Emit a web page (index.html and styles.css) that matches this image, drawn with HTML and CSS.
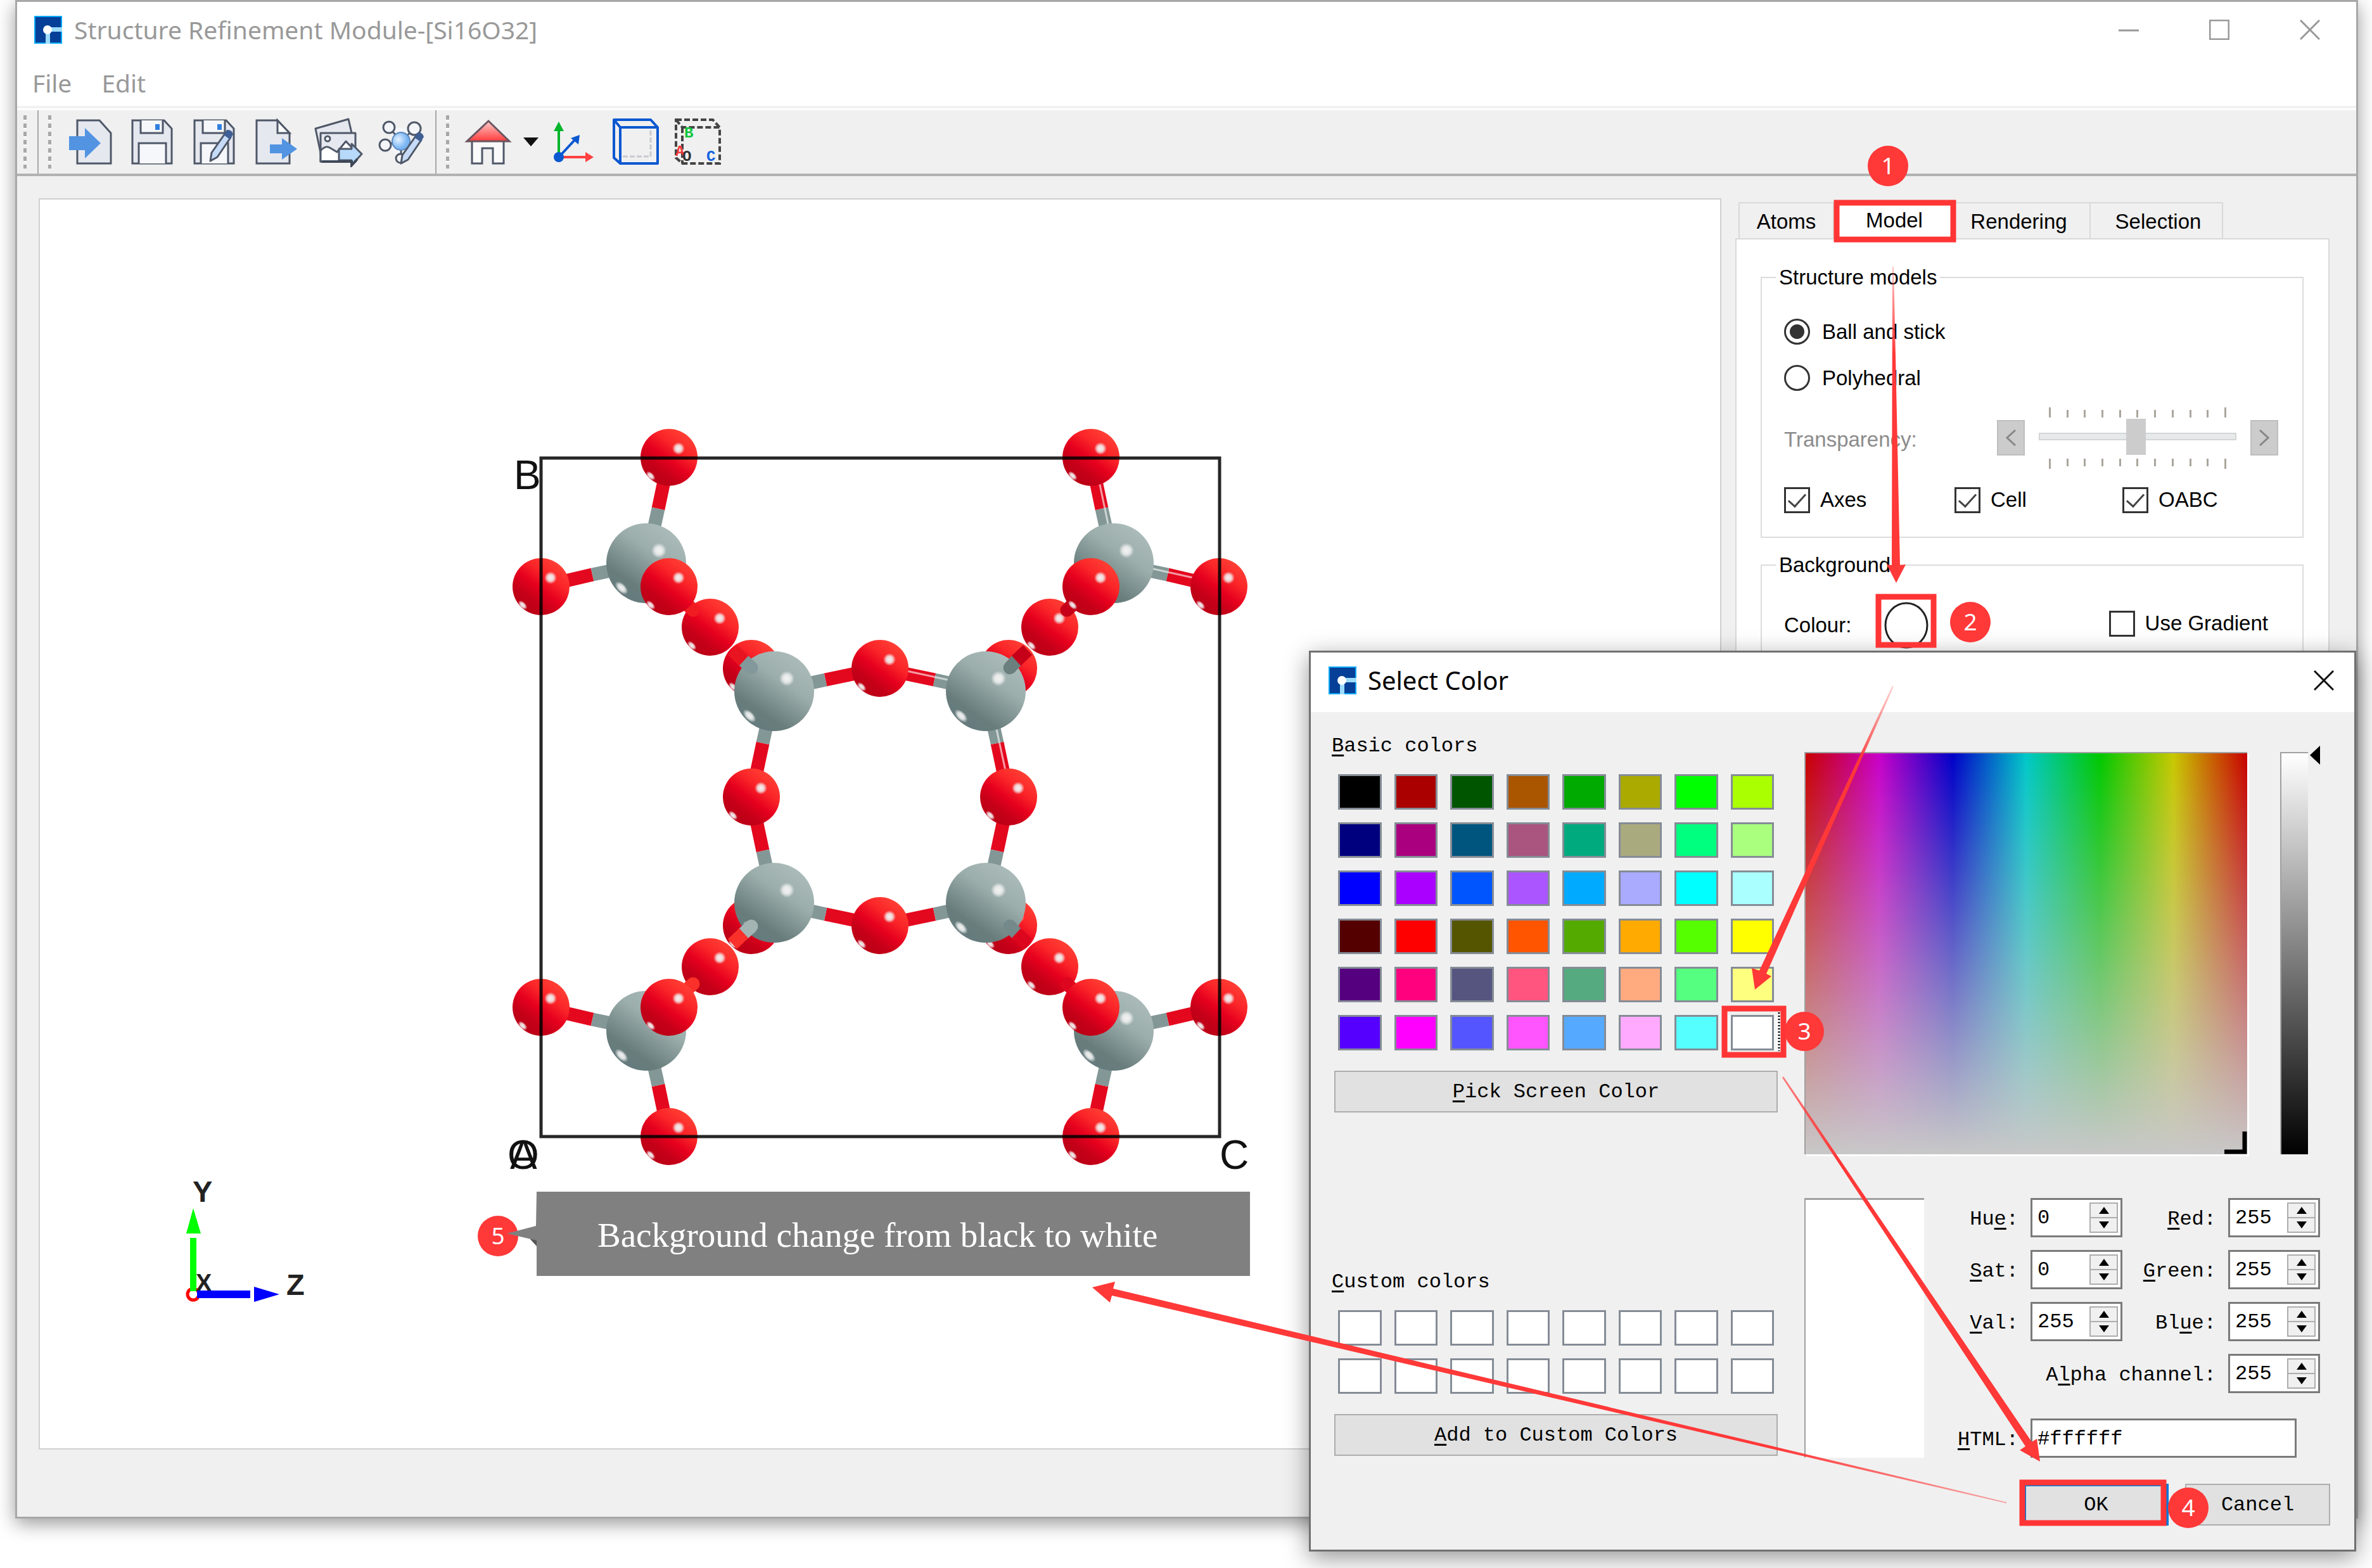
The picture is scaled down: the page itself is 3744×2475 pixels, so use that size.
FILE: index.html
```html
<!DOCTYPE html>
<html lang="en">
<head>
<meta charset="utf-8">
<title>Structure Refinement Module-[Si16O32]</title>
<link rel="stylesheet" href="styles.css">
</head>
<body>
<svg class="defs" aria-hidden="true">
  <defs>
    <symbol id="logo" viewBox="0 0 44 44">
      <rect width="44" height="44" fill="#00a8f8"/>
      <rect x="2" y="2" width="40" height="40" fill="#053f97"/>
      <rect x="22" y="18" width="22" height="7" fill="#9bdcff"/>
      <rect x="18" y="22" width="7" height="22" fill="#9bdcff"/>
      <circle cx="21" cy="22" r="7" fill="#fff"/>
    </symbol>
    <symbol id="floppy" viewBox="0 0 80 80">
      <path d="M9 6H59L71 19V74H9Z" fill="#e6e8ef" stroke="#4f5868" stroke-width="3"/>
      <path d="M22 6V26H57V6M19 74V42H62V74" fill="#f6f7fa" stroke="#4f5868" stroke-width="3"/>
      <rect x="45" y="12" width="7" height="9" fill="#2f7fe0"/>
    </symbol>
    <symbol id="pen" viewBox="0 0 80 80">
      <path d="M34 70L36 57L57 27L66 33L45 64Z" fill="#c6dbf7" stroke="#4f5868" stroke-width="3" stroke-linejoin="round"/>
      <path d="M55 29L60 21Q68 20 70 28L65 36Z" fill="#3f5f94"/>
    </symbol>
    <linearGradient id="gO" x1=".82" y1=".12" x2=".25" y2=".88">
      <stop offset="0" stop-color="#ff3e34"/><stop offset=".3" stop-color="#fa2428"/><stop offset=".56" stop-color="#e6001e"/><stop offset=".82" stop-color="#c40018"/><stop offset="1" stop-color="#bd0016"/>
    </linearGradient>
    <linearGradient id="gSi" x1=".78" y1=".1" x2=".25" y2=".88">
      <stop offset="0" stop-color="#a9bab9"/><stop offset=".35" stop-color="#9caeac"/><stop offset=".65" stop-color="#7c908f"/><stop offset=".85" stop-color="#687d7b"/><stop offset="1" stop-color="#667b7d"/>
    </linearGradient>
    <radialGradient id="gHi"><stop offset="0" stop-color="#f2f2f2"/><stop offset=".5" stop-color="#f2f2f2" stop-opacity=".85"/><stop offset="1" stop-color="#f2f2f2" stop-opacity="0"/></radialGradient>
    <g id="o">
      <circle r="45" fill="url(#gO)"/>
      <circle cx="15" cy="-14" r="10" fill="url(#gHi)"/>
      <ellipse rx="9" ry="5" transform="translate(-29 29) rotate(45)" fill="url(#gHi)"/>
    </g>
    <g id="si">
      <circle r="63" fill="url(#gSi)"/>
      <circle cx="20" cy="-20" r="12" fill="url(#gHi)"/>
      <ellipse rx="13" ry="7" transform="translate(-39 39) rotate(45)" fill="url(#gHi)"/>
    </g>
    <linearGradient id="roof" x1="0" y1="0" x2="0" y2="1"><stop offset="0" stop-color="#fcc"/><stop offset="1" stop-color="#ff3b3b"/></linearGradient>
    <radialGradient id="atom" cx=".35" cy=".4"><stop offset="0" stop-color="#e3f1ff"/><stop offset="1" stop-color="#7ab5f2"/></radialGradient>
  </defs>
</svg>

<main class="window">
  <header class="titlebar">
    <svg class="logo"><use href="#logo"/></svg>
    <h1>Structure Refinement Module-[Si16O32]</h1>
    <div class="controls">
      <button aria-label="Minimize"><svg viewBox="0 0 32 32"><path d="M0 17H32"/></svg></button>
      <button aria-label="Maximize"><svg viewBox="0 0 32 32"><path d="M1 1H31V31H1Z"/></svg></button>
      <button aria-label="Close"><svg viewBox="0 0 32 32"><path d="M1 1L31 31M31 1L1 31"/></svg></button>
    </div>
  </header>
  <nav class="menubar"><button>File</button><button>Edit</button></nav>

  <div class="toolbar">
    <div class="tools"><i class="grip"></i></div>
    <div class="tools">
      <i class="grip"></i>
      <button aria-label="Import"><svg viewBox="0 0 80 80"><path d="M20 6H55L73 26V74H20Z" fill="#e6e8ef" stroke="#4f5868" stroke-width="3"/><path d="M7 31H32V18L57 42L32 66V53H7Z" fill="#5294e2"/></svg></button>
      <button aria-label="Save"><svg><use href="#floppy"/></svg></button>
      <button aria-label="Save as"><svg><use href="#floppy"/><use href="#pen"/></svg></button>
      <button aria-label="Export"><svg viewBox="0 0 80 80"><path d="M9 6H42L61 26V74H9Z" fill="#e6e8ef" stroke="#4f5868" stroke-width="3"/><path d="M42 6V26H61Z" fill="#fff" stroke="#4f5868" stroke-width="3"/><path d="M30 44H49V34L73 51L49 68V58H30Z" fill="#5294e2"/></svg></button>
      <button aria-label="Export image"><svg viewBox="0 0 80 80"><g stroke="#4f5868" stroke-width="3" stroke-linejoin="round"><path d="M13 62L4 19L56 4L62 30" fill="#e6e8ef"/><path d="M12 26H67V71H12Z" fill="#e6e8ef"/><circle cx="23" cy="35" r="4" fill="#fff"/><path d="M12 54Q20 44 28 50L38 56L52 39L67 55V71H12Z" fill="#fff"/><path d="M41 51H61V43L77 59L61 77V69H41Z" fill="#b7dafb"/></g><path d="M14 71H61V77L70 67" fill="none" stroke="#3f4858" stroke-width="4"/></svg></button>
      <button aria-label="Edit atoms"><svg viewBox="0 0 80 80"><g fill="#f4f5f8" stroke="#4f5868" stroke-width="3"><path d="M22 17L41 39L62 19M16 45L41 39L41 65"/><circle cx="22" cy="17" r="9"/><circle cx="62" cy="19" r="10"/><circle cx="16" cy="45" r="9"/><circle cx="40" cy="66" r="7"/></g><circle cx="41" cy="39" r="14" fill="url(#atom)" stroke="#5c88bd" stroke-width="2"/><g transform="translate(7 4)"><use href="#pen" width="80" height="80"/></g></svg></button>
    </div>
    <div class="tools">
      <i class="grip"></i>
      <button aria-label="Home"><svg viewBox="0 0 80 80"><path d="M15 38V74H31V50H48V74H65V38" fill="#fafafa" stroke="#4f5868" stroke-width="3"/><path d="M41 7L74 39H7Z" fill="url(#roof)" stroke="#6a5560" stroke-width="3"/></svg></button>
      <button class="drop" aria-label="Home options"><svg viewBox="0 0 24 14"><path d="M0 0H24L12 14Z" fill="#111"/></svg></button>
      <button aria-label="Axes"><svg viewBox="0 0 80 80"><path d="M17 64V20" stroke="#00b52a" stroke-width="4"/><path d="M17 8L25 23H9Z" fill="#00b52a"/><path d="M17 64H60" stroke="#ff4040" stroke-width="4"/><path d="M72 64L59 56V72Z" fill="#ff4040"/><path d="M17 64L43 36" stroke="#0a57d0" stroke-width="4"/><path d="M50 29L48 44L36 34Z" fill="#0a57d0"/><circle cx="17" cy="64" r="8" fill="#0a57d0"/></svg></button>
      <button aria-label="Cell box"><svg viewBox="0 0 80 80"><path d="M64 22V63H20" fill="none" stroke="#c9c9d0" stroke-width="3" stroke-dasharray="8 3"/><path d="M6 5H64L75 17V74H16L6 65ZM6 5L16 17H75M16 17V74" fill="none" stroke="#0a57d0" stroke-width="4" stroke-linejoin="round"/></svg></button>
      <button aria-label="OABC labels"><svg viewBox="0 0 80 80"><path d="M6 5H64L75 17V74H16L6 65ZM6 5L16 17H75M16 17V74" fill="none" stroke="#444" stroke-width="4" stroke-dasharray="9 4"/><g class="glyphs"><text x="19" y="33" fill="#11c63c">B</text><text x="5" y="62" fill="#f23a3a">A</text><text x="16" y="70" fill="#333">O</text><text x="54" y="70" fill="#1262e0">C</text></g></svg></button>
    </div>
  </div>

  <div class="workspace">
    <section class="viewport" aria-label="Structure view">
      <svg viewBox="63 315 2652 1971">
        <g class="bonds red">
          <path d="M1056 722L1039 803M854 926L935 907M1389 1055L1303 1073M1186 1258L1204 1173"/>
          <path d="M1722 722L1739 803M1924 926L1843 907M1389 1055L1475 1073M1592 1258L1574 1173"/>
          <path d="M1056 1794L1039 1713M854 1590L935 1609M1389 1461L1303 1443M1186 1258L1204 1343"/>
          <path d="M1722 1794L1739 1713M1924 1590L1843 1609M1389 1461L1475 1443M1592 1258L1574 1343"/>
        </g>
        <g class="bonds grey">
          <path d="M1020 889L1039 803M1020 889L935 907M1222 1091L1303 1073M1222 1091L1204 1173"/>
          <path d="M1758 889L1739 803M1758 889L1843 907M1556 1091L1475 1073M1556 1091L1574 1173"/>
          <path d="M1020 1627L1039 1713M1020 1627L935 1609M1222 1425L1303 1443M1222 1425L1204 1343"/>
          <path d="M1758 1627L1739 1713M1758 1627L1843 1609M1556 1425L1475 1443M1556 1425L1574 1343"/>
        </g>
        <g class="gloss">
          <path d="M1727 722L1762 889M1758 884L1924 921M1389 1050L1556 1086M1560 1091L1596 1258"/>
        </g>
        <use href="#o" x="1186" y="1055"/><use href="#o" x="1592" y="1055"/><use href="#o" x="1186" y="1461"/><use href="#o" x="1592" y="1461"/>
        <use href="#si" x="1020" y="889"/><use href="#si" x="1758" y="889"/><use href="#si" x="1020" y="1627"/><use href="#si" x="1758" y="1627"/>
        <use href="#si" x="1222" y="1091"/><use href="#si" x="1556" y="1091"/><use href="#si" x="1222" y="1425"/><use href="#si" x="1556" y="1425"/>
        <use href="#o" x="1056" y="722"/><use href="#o" x="1722" y="722"/><use href="#o" x="1056" y="1794"/><use href="#o" x="1722" y="1794"/>
        <use href="#o" x="854" y="926"/><use href="#o" x="1924" y="926"/><use href="#o" x="854" y="1590"/><use href="#o" x="1924" y="1590"/>
        <use href="#o" x="1389" y="1055"/><use href="#o" x="1389" y="1461"/><use href="#o" x="1186" y="1258"/><use href="#o" x="1592" y="1258"/>
        <use href="#o" x="1121" y="990"/><use href="#o" x="1657" y="990"/><use href="#o" x="1121" y="1526"/><use href="#o" x="1657" y="1526"/>
        <g class="tips">
          <path d="M1173 1042L1186 1054" stroke="#82989a"/><path d="M1156 1026L1174 1043" stroke="#e81420" class="flat"/>
          <path d="M1605 1042L1594 1054" stroke="#6a7f7e"/><path d="M1622 1026L1604 1043" stroke="#c60018" class="flat"/>
          <path d="M1173 1474L1186 1462" stroke="#a3b4b3"/><path d="M1156 1490L1174 1473" stroke="#fa302a" class="flat"/>
          <path d="M1605 1474L1594 1462" stroke="#74898a"/><path d="M1622 1490L1604 1473" stroke="#dc061e" class="flat"/>
          <path d="M1080 950L1094 963" stroke="#f01c22"/><path d="M1698 950L1684 963" stroke="#c60018"/>
          <path d="M1080 1566L1094 1553" stroke="#fa302a"/><path d="M1698 1566L1684 1553" stroke="#dc061e"/>
        </g>
        <use href="#o" x="1056" y="926"/><use href="#o" x="1722" y="926"/><use href="#o" x="1056" y="1590"/><use href="#o" x="1722" y="1590"/>
        <rect x="854" y="723" width="1071" height="1071" fill="none" stroke="#000" stroke-opacity=".85" stroke-width="5"/>
        <g class="corner"><text x="811" y="772">B</text><text x="801" y="1845">O</text><text x="805" y="1845">A</text><text x="1925" y="1845">C</text></g>
        <circle cx="305" cy="2043" r="9" fill="none" stroke="#f00" stroke-width="5"/>
        <g class="axis"><text x="304" y="1897">Y</text><text x="309" y="2038" class="x">X</text><text x="452" y="2044">Z</text></g>
        <path d="M300 1954H310V2038H300ZM305 1907L317 1947H294Z" fill="#0f0"/>
        <path d="M311 2037H395V2049H311ZM401 2031L441 2043L401 2055Z" fill="#00f"/>
      </svg>
    </section>

    <aside class="side">
      <div class="tabs" role="tablist">
        <button role="tab" class="atoms">Atoms</button><button role="tab" class="model" aria-selected="true">Model</button><button role="tab" class="rendering">Rendering</button><button role="tab" class="selection">Selection</button>
      </div>
      <div class="pane">
        <fieldset>
          <legend>Structure models</legend>
          <label class="option"><input type="radio" name="model" checked>Ball and stick</label>
          <label class="option"><input type="radio" name="model">Polyhedral</label>
          <div class="transparency">
            <label for="transparency">Transparency:</label>
            <button disabled aria-label="Less"><svg viewBox="0 0 16 26"><path d="M15 1L2 13L15 25"/></svg></button>
            <div class="slider">
              <div class="ticks"><i></i><i></i><i></i><i></i><i></i><i></i><i></i><i></i><i></i><i></i><i></i></div>
              <input id="transparency" type="range" disabled value="49">
              <div class="ticks below"><i></i><i></i><i></i><i></i><i></i><i></i><i></i><i></i><i></i><i></i><i></i></div>
            </div>
            <button disabled aria-label="More"><svg viewBox="0 0 16 26"><path d="M1 1L14 13L1 25"/></svg></button>
          </div>
          <div class="checks">
            <label><input type="checkbox" checked>Axes</label>
            <label><input type="checkbox" checked>Cell</label>
            <label><input type="checkbox" checked>OABC</label>
          </div>
        </fieldset>
        <fieldset>
          <legend>Background</legend>
          <div class="background">
            <label for="colour">Colour:</label>
            <button id="colour" class="colour"><svg viewBox="0 0 70 74"><ellipse cx="35" cy="37" rx="33" ry="35"/></svg></button>
            <label class="gradient"><input type="checkbox">Use Gradient</label>
          </div>
        </fieldset>
      </div>
    </aside>
  </div>
</main>

<section class="dialog" role="dialog" aria-label="Select Color">
  <header class="dialog-title">
    <svg class="logo"><use href="#logo"/></svg>
    <h2>Select Color</h2>
    <button aria-label="Close"><svg viewBox="0 0 32 32"><path d="M1 1L31 31M31 1L1 31"/></svg></button>
  </header>
  <div class="dialog-body">
    <div class="palette">
      <h3><u>B</u>asic colors</h3>
      <div class="swatches">
        <button style="background:#000000"></button><button style="background:#aa0000"></button><button style="background:#005500"></button><button style="background:#aa5500"></button><button style="background:#00aa00"></button><button style="background:#aaaa00"></button><button style="background:#00ff00"></button><button style="background:#aaff00"></button>
        <button style="background:#00007f"></button><button style="background:#aa007f"></button><button style="background:#00557f"></button><button style="background:#aa557f"></button><button style="background:#00aa7f"></button><button style="background:#aaaa7f"></button><button style="background:#00ff7f"></button><button style="background:#aaff7f"></button>
        <button style="background:#0000ff"></button><button style="background:#aa00ff"></button><button style="background:#0055ff"></button><button style="background:#aa55ff"></button><button style="background:#00aaff"></button><button style="background:#aaaaff"></button><button style="background:#00ffff"></button><button style="background:#aaffff"></button>
        <button style="background:#550000"></button><button style="background:#ff0000"></button><button style="background:#555500"></button><button style="background:#ff5500"></button><button style="background:#55aa00"></button><button style="background:#ffaa00"></button><button style="background:#55ff00"></button><button style="background:#ffff00"></button>
        <button style="background:#55007f"></button><button style="background:#ff007f"></button><button style="background:#55557f"></button><button style="background:#ff557f"></button><button style="background:#55aa7f"></button><button style="background:#ffaa7f"></button><button style="background:#55ff7f"></button><button style="background:#ffff7f"></button>
        <button style="background:#5500ff"></button><button style="background:#ff00ff"></button><button style="background:#5555ff"></button><button style="background:#ff55ff"></button><button style="background:#55aaff"></button><button style="background:#ffaaff"></button><button style="background:#55ffff"></button><button class="current" style="background:#ffffff"></button>
      </div>
      <button class="push"><span><u>P</u>ick Screen Color</span></button>
      <h3 class="custom"><u>C</u>ustom colors</h3>
      <div class="swatches">
        <button></button><button></button><button></button><button></button><button></button><button></button><button></button><button></button>
        <button></button><button></button><button></button><button></button><button></button><button></button><button></button><button></button>
      </div>
      <button class="push"><span><u>A</u>dd to Custom Colors</span></button>
    </div>
    <div class="picker">
      <div class="spaces">
        <div class="spectrum"><svg viewBox="0 0 36 36"><path d="M0 32H32V0" fill="none" stroke="#000" stroke-width="7"/></svg></div>
        <div class="value"></div>
        <svg class="marker" viewBox="0 0 16 30"><path d="M0 15L16 0V30Z"/></svg>
      </div>
      <div class="details">
        <div class="preview"></div>
        <div class="fields">
          <label for="hue">Hu<u>e</u>:</label>
          <div class="spin"><input id="hue" value="0"><div><button aria-label="Up"><svg viewBox="0 0 16 11"><path d="M8 0L16 11H0Z"/></svg></button><button aria-label="Down"><svg viewBox="0 0 16 11"><path d="M0 0H16L8 11Z"/></svg></button></div></div>
          <label for="red"><u>R</u>ed:</label>
          <div class="spin"><input id="red" value="255"><div><button aria-label="Up"><svg viewBox="0 0 16 11"><path d="M8 0L16 11H0Z"/></svg></button><button aria-label="Down"><svg viewBox="0 0 16 11"><path d="M0 0H16L8 11Z"/></svg></button></div></div>
          <label for="sat"><u>S</u>at:</label>
          <div class="spin"><input id="sat" value="0"><div><button aria-label="Up"><svg viewBox="0 0 16 11"><path d="M8 0L16 11H0Z"/></svg></button><button aria-label="Down"><svg viewBox="0 0 16 11"><path d="M0 0H16L8 11Z"/></svg></button></div></div>
          <label for="green"><u>G</u>reen:</label>
          <div class="spin"><input id="green" value="255"><div><button aria-label="Up"><svg viewBox="0 0 16 11"><path d="M8 0L16 11H0Z"/></svg></button><button aria-label="Down"><svg viewBox="0 0 16 11"><path d="M0 0H16L8 11Z"/></svg></button></div></div>
          <label for="val"><u>V</u>al:</label>
          <div class="spin"><input id="val" value="255"><div><button aria-label="Up"><svg viewBox="0 0 16 11"><path d="M8 0L16 11H0Z"/></svg></button><button aria-label="Down"><svg viewBox="0 0 16 11"><path d="M0 0H16L8 11Z"/></svg></button></div></div>
          <label for="blue">Bl<u>u</u>e:</label>
          <div class="spin"><input id="blue" value="255"><div><button aria-label="Up"><svg viewBox="0 0 16 11"><path d="M8 0L16 11H0Z"/></svg></button><button aria-label="Down"><svg viewBox="0 0 16 11"><path d="M0 0H16L8 11Z"/></svg></button></div></div>
          <label for="alpha" class="alpha">A<u>l</u>pha channel:</label>
          <div class="spin"><input id="alpha" value="255"><div><button aria-label="Up"><svg viewBox="0 0 16 11"><path d="M8 0L16 11H0Z"/></svg></button><button aria-label="Down"><svg viewBox="0 0 16 11"><path d="M0 0H16L8 11Z"/></svg></button></div></div>
          <label for="html" class="html"><u>H</u>TML:</label>
          <input id="html" class="hex" value="#ffffff">
        </div>
      </div>
    </div>
  </div>
  <footer class="dialog-actions"><button class="push ok">OK</button><button class="push">Cancel</button></footer>
</section>

<svg class="notes" viewBox="0 0 3744 2475" preserveAspectRatio="xMinYMin meet">
  <defs>
    <linearGradient id="f1" gradientUnits="userSpaceOnUse" x1="2988" y1="421" x2="2989" y2="560"><stop offset="0" stop-color="#ff3838" stop-opacity=".3"/><stop offset="1" stop-color="#ff3838"/></linearGradient>
    <linearGradient id="f2" gradientUnits="userSpaceOnUse" x1="2988" y1="1083" x2="2930" y2="1210"><stop offset="0" stop-color="#ff3838" stop-opacity=".2"/><stop offset="1" stop-color="#ff3838"/></linearGradient>
    <linearGradient id="f3" gradientUnits="userSpaceOnUse" x1="2814" y1="1700" x2="2900" y2="1828"><stop offset="0" stop-color="#ff3838" stop-opacity=".6"/><stop offset="1" stop-color="#ff3838"/></linearGradient>
    <linearGradient id="f4" gradientUnits="userSpaceOnUse" x1="3167" y1="2372" x2="2800" y2="2285"><stop offset="0" stop-color="#ff3838" stop-opacity=".4"/><stop offset="1" stop-color="#ff3838"/></linearGradient>
  </defs>
  <path d="M2808 1598V1659" stroke="#000" stroke-width="3" stroke-dasharray="2 3"/>
  <g class="frames">
    <rect x="2899" y="320" width="184" height="58"/>
    <rect x="2965" y="942" width="87" height="76"/>
    <rect x="2722" y="1592" width="93" height="73"/>
    <rect x="3192" y="2340" width="223" height="64"/>
  </g>
  <polygon fill="url(#f1)" points="2987,421 2989,421 2999,892 3008,891 2993,920 2978,891 2986,892"/>
  <polygon fill="url(#f2)" points="2987,1082 2989,1084 2788,1537 2796,1541 2770,1562 2765,1528 2777,1532"/>
  <polygon fill="url(#f3)" points="2815,1699 2813,1701 3197,2283 3188,2289 3220,2307 3215,2271 3207,2276"/>
  <polygon fill="url(#f4)" points="3167,2371 3167,2373 1755,2045 1752,2056 1724,2032 1760,2023 1757,2034"/>
  <g class="badges">
    <circle cx="2980" cy="262" r="32"/><text x="2980" y="275">1</text>
    <circle cx="3110" cy="982" r="32"/><text x="3110" y="995">2</text>
    <circle cx="2848" cy="1628" r="31"/><text x="2848" y="1641">3</text>
    <circle cx="3454" cy="2380" r="32"/><text x="3454" y="2393">4</text>
    <circle cx="786" cy="1951" r="32"/><text x="786" y="1964">5</text>
  </g>
  <path d="M836 1955L847 1967V1957Z" fill="#555"/>
  <path d="M847 1881H1973V2014H847V1958L800 1947L846 1935Z" fill="#808080"/>
  <text class="callout" x="943" y="1968">Background change from black to white</text>
</svg>
</body>
</html>
```
FILE: styles.css
```css
* { box-sizing: border-box; }

body {
  margin: 0;
  position: relative;
  min-height: 100vh;
  overflow: hidden;
  background: #fff;
  font: 33px/40px "Liberation Sans", sans-serif;
  color: #000;
}

button, input { font: inherit; color: inherit; margin: 0; padding: 0; border: 0; background: none; }
button { display: flex; align-items: center; justify-content: center; }
h1, h2, h3 { margin: 0; font-size: inherit; font-weight: normal; }
.defs { position: absolute; width: 0; height: 0; }
.logo { width: 44px; height: 44px; flex: none; }

/* Main window */
.window {
  display: flex;
  flex-direction: column;
  min-height: calc(100vh - 78px);
  margin: 0 22px 0 24px;
  border: 3px solid #a8a8a8;
  background: #f0f0f0;
  box-shadow: 0 8px 28px rgba(0, 0, 0, .4);
}

.titlebar { display: flex; align-items: center; height: 88px; padding: 0 49px 0 27px; background: #fff; }
.titlebar h1 { margin-left: 19px; font: 39px/48px "Noto Sans", sans-serif; color: #999; }
.controls { display: flex; margin-left: auto; }
.controls button { width: 48px; height: 48px; margin-left: 95px; }
.controls svg, .dialog-title button svg { width: 32px; height: 32px; fill: none; stroke: #999; stroke-width: 3px; }

.menubar { display: flex; gap: 47px; height: 80px; padding: 4px 24px 0; background: #fff; border-bottom: 4px solid #f2f2f2; }
.menubar button { font: 39px/48px "Noto Sans", sans-serif; color: #999; }

.toolbar { display: flex; height: 107px; border-top: 3px solid #fff; border-bottom: 4px solid #b2b2b2; }
.tools { display: flex; align-items: center; height: 100%; }
.tools + .tools { border-left: 2px solid #a8a8a8; margin-left: 15px; }
.tools:first-child { padding-left: 4px; }
.tools:last-child { margin-left: 6px; }
.grip { width: 5px; height: 84px; margin: 0 12px 0 15px; background: repeating-linear-gradient(#a8a8a8 0 7px, #fff 7px 9px, transparent 9px 13px); }
.tools:first-child .grip { margin: 0 2px 0 6px; }
.tools button { width: 98px; height: 90px; }
.tools button svg { width: 80px; height: 80px; }
.tools .drop { width: 37px; }
.tools .drop svg { width: 24px; height: 14px; }
.glyphs { font: bold 24px "Liberation Mono", monospace; }

.workspace { display: flex; flex: 1; gap: 22px; padding: 35px 42px 106px 34px; }
.viewport { display: flex; flex: 1; min-width: 0; background: #fff; border: 2px solid #d0d0d0; }
.viewport svg { width: 100%; }
.bonds { stroke-width: 21px; fill: none; }
.bonds.red { stroke: #e4081e; }
.bonds.grey { stroke: #839796; }
.gloss { stroke: #fff; stroke-opacity: .6; stroke-width: 3px; }
.tips { stroke-width: 21px; stroke-linecap: round; }
.tips .flat { stroke-linecap: butt; }
.corner { font: 64px "Liberation Sans", sans-serif; fill: #111; }
.axis { font: bold 47px "Liberation Sans", sans-serif; fill: #222; }
.axis .x { font-size: 38px; }

/* Side panel */
.side { display: flex; flex-direction: column; width: 938px; flex: none; }
.tabs { display: flex; align-items: flex-end; height: 63px; padding-left: 5px; }
.tabs button { height: 57px; padding-top: 3px; border: 2px solid #d9d9d9; border-bottom: 0; border-left: 0; }
.tabs .atoms { width: 151px; border-left: 2px solid #d9d9d9; }
.tabs .model { width: 192px; height: 60px; margin-bottom: -2px; padding: 0 0 3px; background: #fff; }
.tabs .rendering { width: 213px; padding-right: 12px; }
.tabs .selection { width: 209px; padding-left: 6px; }
.pane { flex: 1; padding: 40px 39px 0 38px; background: #fff; border: 2px solid #d9d9d9; }

fieldset { min-width: 0; margin: 0 0 23px; padding: 29px 22px 14px; border: 2px solid #dcdcdc; }
legend { padding: 0 5px; }
.option { display: flex; align-items: center; gap: 19px; height: 73px; padding-left: 13px; }
input[type=radio], input[type=checkbox] { appearance: none; flex: none; width: 41px; height: 41px; border: 3px solid #333; background: #fff; }
input[type=radio] { border-radius: 50%; }
input[type=radio]:checked { background: radial-gradient(circle, #333 0 11px, #fff 12px); }
input[type=checkbox] { display: grid; place-items: center; }
input[type=checkbox]:checked::before { content: ""; width: 12px; height: 24px; margin-bottom: 6px; border: solid #444; border-width: 0 3px 3px 0; rotate: 42deg; }

.transparency { display: flex; align-items: center; gap: 22px; height: 112px; padding: 4px 16px 0 13px; color: #8c8c8c; }
.transparency label { flex: 1; padding-top: 6px; }
.transparency button { width: 44px; height: 56px; border: 2px solid #bfbfbf; background: #ccc; }
.transparency button svg { width: 16px; height: 26px; fill: none; stroke: #888; stroke-width: 3px; }
.slider { width: 312px; }
.ticks { display: flex; justify-content: space-between; align-items: flex-end; height: 16px; padding: 0 16px; }
.ticks i { width: 3px; height: 12px; background: #aaa69c; }
.ticks i:first-child, .ticks i:last-child { height: 16px; }
.ticks.below { align-items: flex-start; }
input[type=range] { appearance: none; display: block; width: 100%; height: 57px; margin: 2px 0 6px; background: linear-gradient(#d3d6d5, #d3d6d5) center / 100% 12px no-repeat; }
input[type=range]::-webkit-slider-runnable-track { height: 57px; background: linear-gradient(#e7eaea, #e7eaea) center / 308px 8px no-repeat; }
input[type=range]::-webkit-slider-thumb { appearance: none; width: 31px; height: 57px; background: #ccc; }

.checks { display: grid; grid-template-columns: 269px 265px 1fr; align-items: center; height: 88px; padding-left: 13px; }
.checks label, .gradient { display: flex; align-items: center; gap: 16px; }
.background { display: grid; grid-template-columns: 145px 95px 1fr; align-items: center; height: 86px; padding: 0 32px 0 13px; }
.background > label:first-child { padding-top: 6px; }
.background .gradient { justify-self: end; }
.colour { height: 84px; padding-top: 6px; overflow: hidden; }
.colour svg { width: 70px; height: 74px; fill: #fff; stroke: #222; stroke-width: 3px; }

/* Colour dialog */
.dialog {
  position: absolute;
  left: 2066px;
  top: 1027px;
  width: 1653px;
  border: 3px solid #707070;
  background: #f0f0f0;
  box-shadow: 0 10px 36px rgba(0, 0, 0, .42);
  font: 32px/40px "Liberation Mono", monospace;
}
.dialog u { text-decoration-thickness: 3px; text-underline-offset: 5px; }
.dialog-title { display: flex; align-items: center; height: 94px; padding: 0 26px 6px 28px; background: #fff; }
.dialog-title h2 { margin-left: 18px; font: 40px/48px "Noto Sans", sans-serif; }
.dialog-title button { width: 44px; height: 44px; margin-left: auto; }
.dialog-title button svg { stroke: #111; }

.dialog-body { display: flex; gap: 42px; padding: 34px 38px 0 33px; }
.palette { display: flex; flex-direction: column; width: 704px; flex: none; padding-bottom: 3px; }
.palette .custom { margin-top: auto; }
.swatches { display: grid; grid-template-columns: repeat(8, 1fr); gap: 20px; padding: 24px 6px 32px 10px; }
.swatches button { height: 56px; border: 3px solid #858c96; background: #fff; }
.push { height: 66px; padding-top: 2px; border: 2px solid #adadad; background: #e1e1e1; }
.palette .push { margin-left: 4px; }
.swatches .current { box-shadow: 7px 0 0 #f8f8f8, -5px 0 0 #f8f8f8; }

.picker { flex: 1; padding-top: 29px; }
.spaces { display: flex; height: 635px; margin-bottom: 69px; }
.spectrum {
  display: flex;
  align-items: flex-end;
  justify-content: flex-end;
  width: 699px;
  border: solid #a0a0a0;
  border-width: 2px 0 0 2px;
  background: linear-gradient(rgba(200, 200, 200, 0), #c8c8c8), linear-gradient(90deg, #c80000, #c800c8, #0000c8, #00c8c8, #00c800, #c8c800, #c80000);
  box-shadow: 3px 3px 0 #fff;
}
.spectrum svg { width: 36px; height: 36px; }
.value { width: 44px; margin-left: 52px; border: solid #a0a0a0; border-width: 2px 0 0 2px; background: linear-gradient(#fff, #000); }
.marker { width: 16px; height: 30px; margin: -10px 0 0 3px; }
.details { display: flex; gap: 23px; padding-right: 16px; }
.preview { width: 189px; border: solid #a0a0a0; border-width: 3px 0 0 2px; background: #fff; }
.fields { display: grid; grid-template-columns: 126px 145px 1fr 145px; gap: 20px 19px; flex: 1; align-items: center; text-align: right; }
.fields label { padding-top: 6px; }
.spin { display: flex; height: 62px; padding: 4px; border: 3px solid #7a7a7a; background: #fff; }
.spin input { flex: 1; min-width: 0; padding: 2px 0 0 4px; }
.spin div { display: flex; flex-direction: column; width: 45px; border: 2px solid #adadad; background: #f0f0f0; }
.spin button { flex: 1; }
.spin button svg { width: 16px; height: 11px; }
.spin button + button { border-top: 2px solid #adadad; }
.alpha { grid-column: span 3; }
.html { margin-top: 20px; }
.hex { grid-column: span 3; height: 62px; margin: 20px 37px 0 0; padding: 3px 0 0 8px; border: 3px solid #7a7a7a; background: #fff; }
.dialog-actions { display: flex; justify-content: flex-end; gap: 26px; padding: 41px 38px 38px; }
.dialog-actions .push { width: 229px; }
.dialog-actions .ok { border: 4px solid #0078d7; }

/* Annotation layer */
.notes { position: absolute; left: 0; top: 0; width: 100%; pointer-events: none; }
.frames { fill: none; stroke: #ff3535; stroke-width: 9px; }
.badges { fill: #ff3838; font: 37px "Noto Sans", sans-serif; text-anchor: middle; }
.badges text { fill: #fff; }
.callout { font: 55px "Liberation Serif", serif; fill: #fff; }
```
